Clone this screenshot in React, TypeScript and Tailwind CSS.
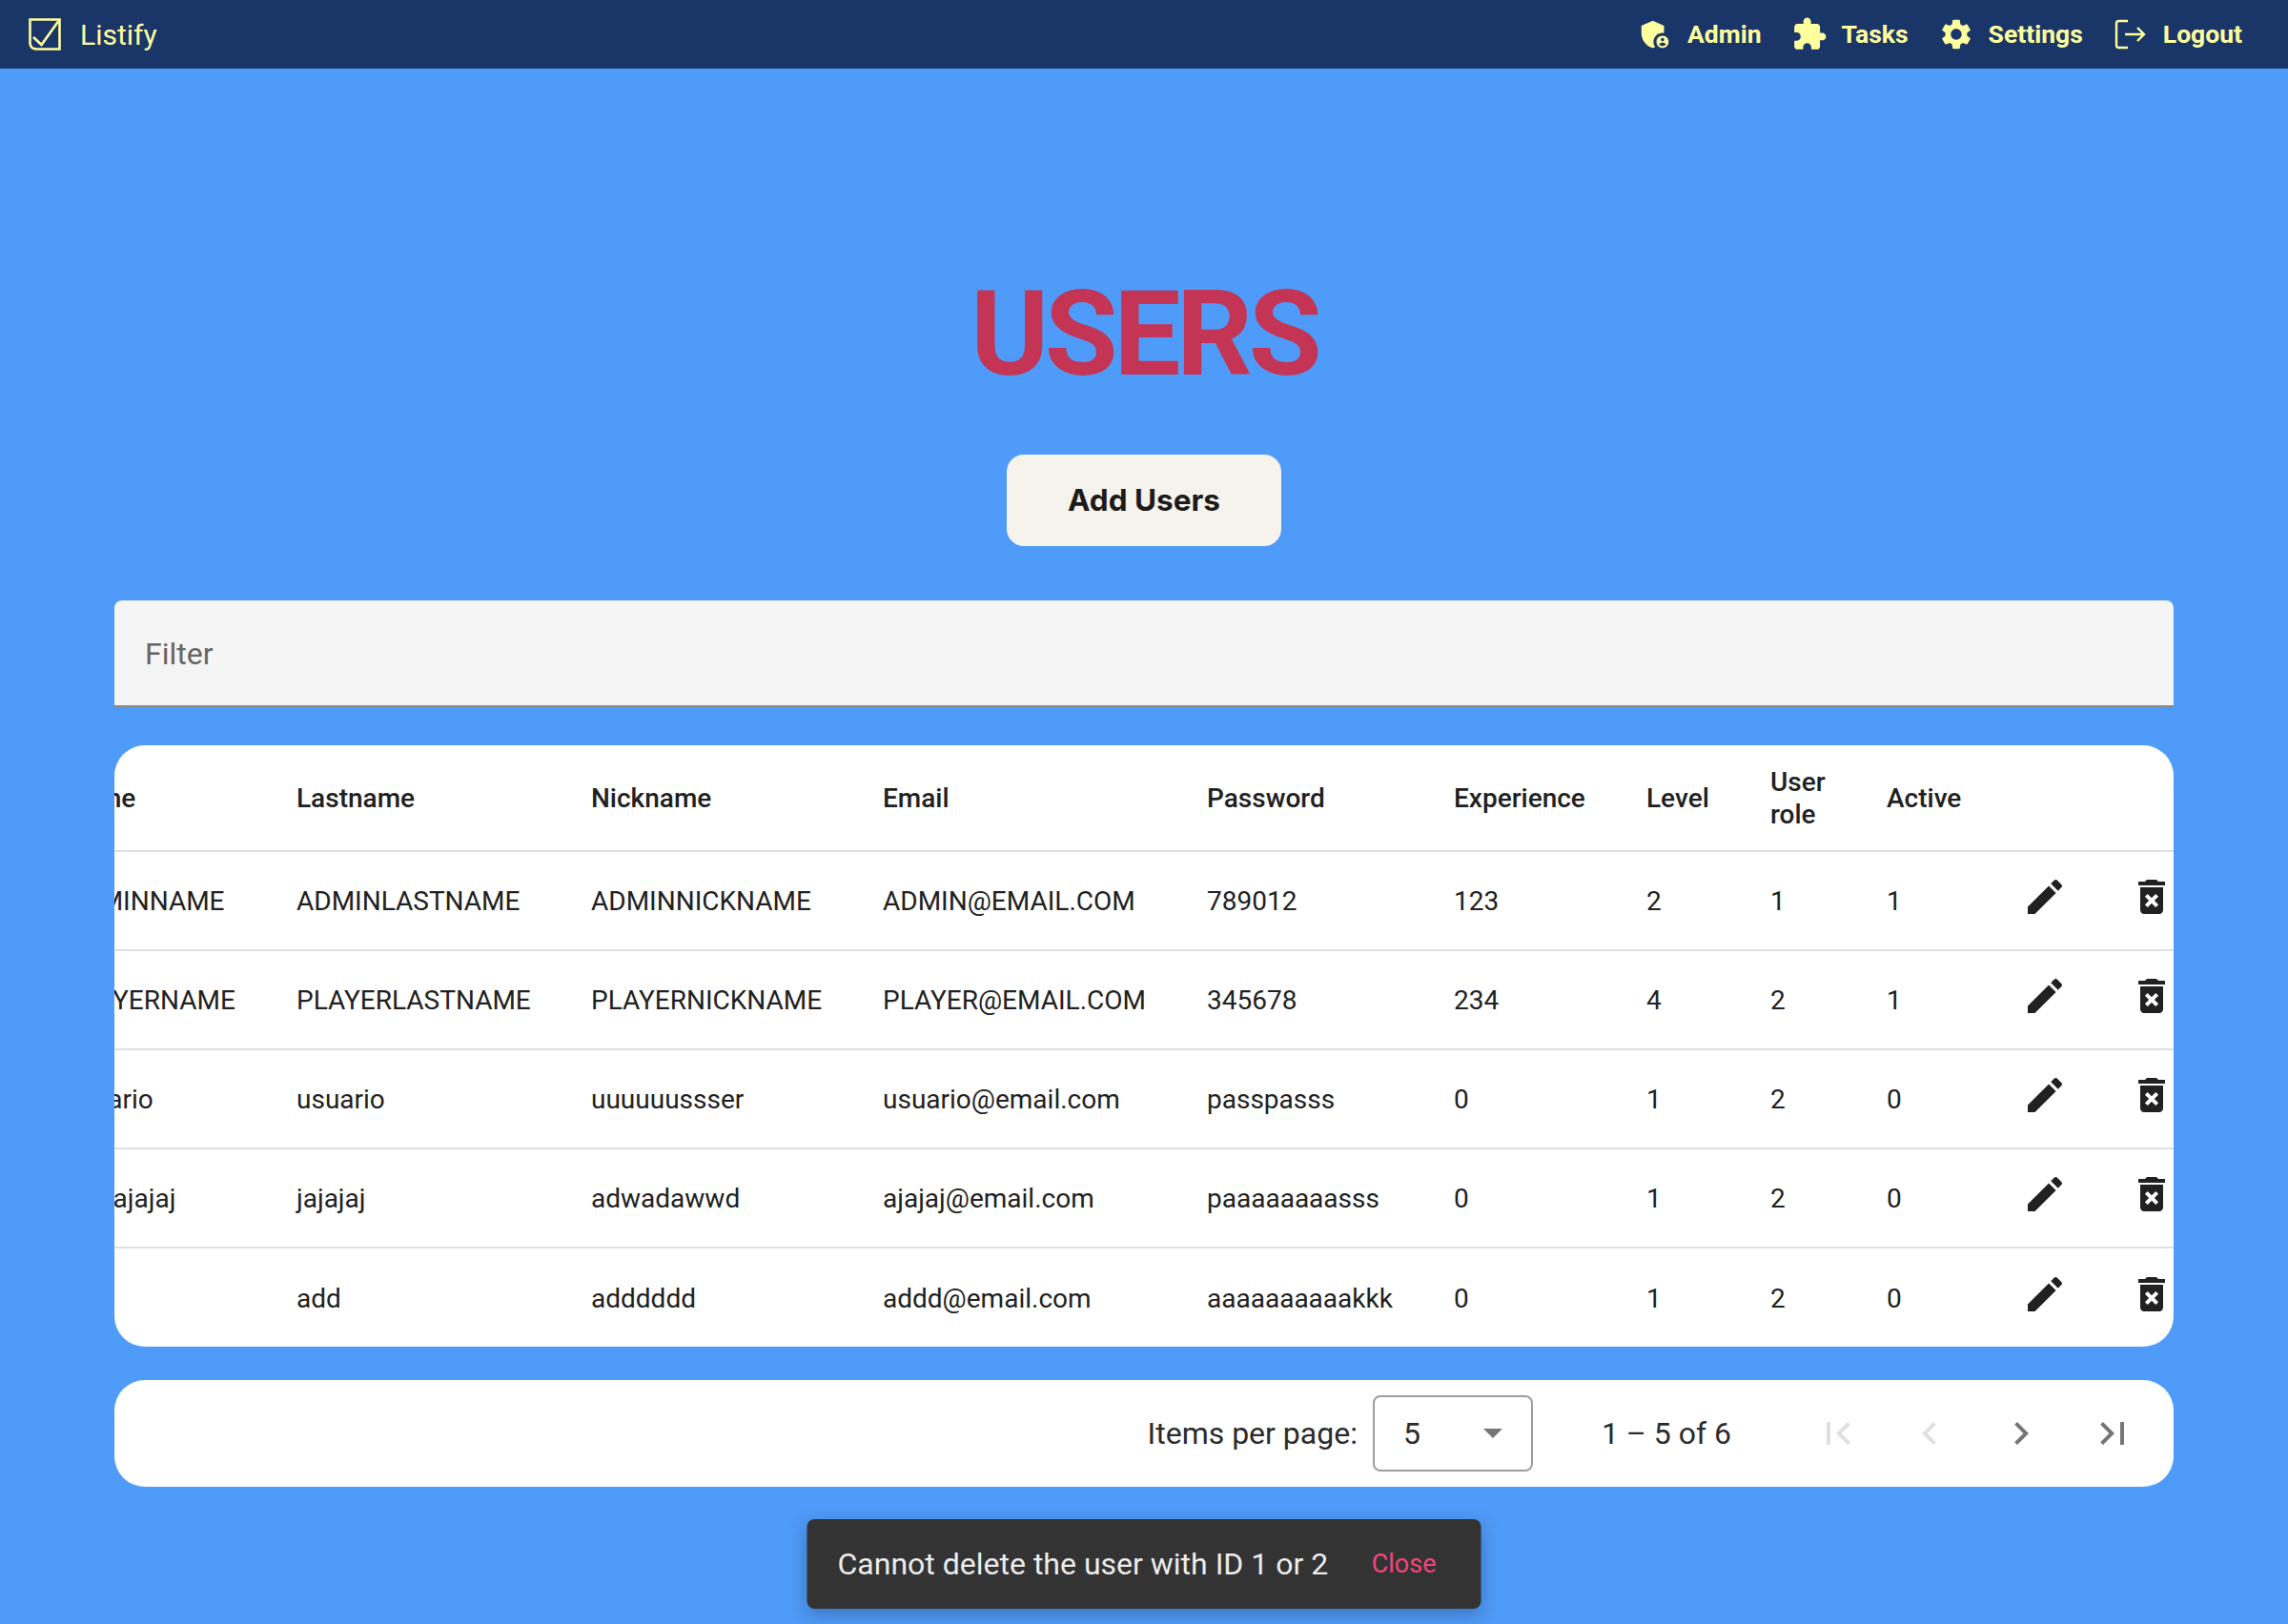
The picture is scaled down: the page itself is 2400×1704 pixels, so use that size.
import React from "react";

const Icon = ({ d, className = "" }: { d: string; className?: string }) => (
  <svg viewBox="0 0 24 24" fill="currentColor" className={className}>
    <path d={d} fillRule="evenodd" />
  </svg>
);

const P = {
  admin:
    "M17,11c0.34,0,0.67,0.04,1,0.09V6.27L10.5,3L3,6.27v4.91c0,4.54,3.2,8.79,7.5,9.82c0.55-0.13,1.08-0.32,1.6-0.55C11.41,19.47,11,18.28,11,17C11,13.69,13.69,11,17,11z M17,13c-2.21,0-4,1.79-4,4c0,2.21,1.79,4,4,4s4-1.79,4-4C21,14.79,19.21,13,17,13z M17,14.38c0.62,0,1.12,0.51,1.12,1.12s-0.51,1.12-1.12,1.12s-1.12-0.51-1.12-1.12S16.38,14.38,17,14.38z M17,19.75c-0.93,0-1.74-0.46-2.24-1.17c0.05-0.72,1.51-1.08,2.24-1.08s2.19,0.36,2.24,1.08C18.74,19.29,17.93,19.75,17,19.75z",
  puzzle:
    "M20.5 11H19V7c0-1.1-.9-2-2-2h-4V3.5C13 2.12 11.88 1 10.5 1S8 2.12 8 3.5V5H4c-1.1 0-1.99.9-1.99 2v3.8H3.5c1.49 0 2.7 1.21 2.7 2.7s-1.21 2.7-2.7 2.7H2V20c0 1.1.9 2 2 2h3.8v-1.5c0-1.49 1.21-2.7 2.7-2.7 1.49 0 2.7 1.21 2.7 2.7V22H17c1.1 0 2-.9 2-2v-4h1.5c1.38 0 2.5-1.12 2.5-2.5S21.88 11 20.5 11z",
  gear:
    "M19.14 12.94c.04-.3.06-.61.06-.94 0-.32-.02-.64-.07-.94l2.03-1.58c.18-.14.23-.41.12-.61l-1.92-3.32c-.12-.22-.37-.29-.59-.22l-2.39.96c-.5-.38-1.03-.7-1.62-.94l-.36-2.54c-.04-.24-.24-.41-.48-.41h-3.84c-.24 0-.43.17-.47.41l-.36 2.54c-.59.24-1.13.57-1.62.94l-2.39-.96c-.22-.08-.47 0-.59.22L2.74 8.87c-.12.21-.08.47.12.61l2.03 1.58c-.05.3-.09.63-.09.94s.02.64.07.94l-2.03 1.58c-.18.14-.23.41-.12.61l1.92 3.32c.12.22.37.29.59.22l2.39-.96c.5.38 1.03.7 1.62.94l.36 2.54c.05.24.24.41.48.41h3.84c.24 0 .44-.17.47-.41l.36-2.54c.59-.24 1.13-.56 1.62-.94l2.39.96c.22.08.47 0 .59-.22l1.92-3.32c.12-.22.07-.47-.12-.61l-2.01-1.58zM12 15.6c-1.98 0-3.6-1.62-3.6-3.6s1.62-3.6 3.6-3.6 3.6 1.62 3.6 3.6-1.62 3.6-3.6 3.6z",
  edit:
    "M3 17.25V21h3.75L17.81 9.94l-3.75-3.75L3 17.25zM20.71 7.04c.39-.39.39-1.02 0-1.41l-2.34-2.34c-.39-.39-1.02-.39-1.41 0l-1.83 1.83 3.75 3.75 1.83-1.83z",
  trash:
    "M6 19c0 1.1.9 2 2 2h8c1.1 0 2-.9 2-2V7H6v12zm2.46-7.12l1.41-1.41L12 12.59l2.12-2.12 1.41 1.41L13.41 14l2.12 2.12-1.41 1.41L12 15.41l-2.12 2.12-1.41-1.41L10.59 14l-2.13-2.12zM15.5 4l-1-1h-5l-1 1H5v2h14V4z",
  first: "M18.41 16.59L13.82 12l4.59-4.41L17 6l-6 6 6 6zM6 6h2v12H6z",
  prev: "M15.41 7.41L14 6l-6 6 6 6 1.41-1.41L10.83 12z",
  next: "M10 6L8.59 7.41 13.17 12l-4.58 4.59L10 18l6-6z",
  last: "M5.59 7.41L10.18 12l-4.59 4.59L7 18l6-6-6-6zM16 6h2v12h-2z",
};

const rows = [
  ["ADMINNAME", "ADMINLASTNAME", "ADMINNICKNAME", "ADMIN@EMAIL.COM", "789012", "123", "2", "1", "1"],
  ["PLAYERNAME", "PLAYERLASTNAME", "PLAYERNICKNAME", "PLAYER@EMAIL.COM", "345678", "234", "4", "2", "1"],
  ["usuario", "usuario", "uuuuuussser", "usuario@email.com", "passpasss", "0", "1", "2", "0"],
  ["jajajajajaj", "jajajaj", "adwadawwd", "ajajaj@email.com", "paaaaaaaasss", "0", "1", "2", "0"],
  ["", "add", "adddddd", "addd@email.com", "aaaaaaaaaakkk", "0", "1", "2", "0"],
];

const NavItem = ({ d, label }: { d: string; label: string }) => (
  <a className="flex items-center gap-[15px]">
    <Icon d={d} className="size-[38px]" />
    <span>{label}</span>
  </a>
);

export default function App() {
  return (
    <div className="relative min-h-[1704px] bg-[#4f9bf9] font-['Roboto',sans-serif] text-[#212121]">
      <nav className="flex h-[72px] items-center justify-between bg-[#1a3568] pl-[30px] pr-[48px] text-[#ffff9e]">
        <div className="flex items-center gap-5 text-[30px]">
          <svg viewBox="0 0 34 34" fill="none" stroke="currentColor" strokeWidth="2.6" className="size-[34px]">
            <path d="M1.5 1.5H32.5V32.5H8.5C4 32.5 1.5 30 1.5 26Z" />
            <path d="M5 20L13.5 28L32.5 1.5" />
          </svg>
          <span>Listify</span>
        </div>
        <div className="flex items-center gap-[31px] text-[26.5px] font-bold">
          <NavItem d={P.admin} label="Admin" />
          <NavItem d={P.puzzle} label="Tasks" />
          <NavItem d={P.gear} label="Settings" />
          <a className="flex items-center gap-[15px]">
            <svg viewBox="0 0 38 38" fill="none" stroke="currentColor" strokeWidth="2.4" className="size-[38px]">
              <path d="M16 5H6.5C5 5 4 6 4 7.5V30.5C4 32 5 33 6.5 33H16" />
              <path d="M13 19H33M26 12L33 19L26 26" />
            </svg>
            <span>Logout</span>
          </a>
        </div>
      </nav>

      <main className="flex flex-col items-center px-[120px]">
        <h1 className="mt-[204px] text-[125px] font-bold leading-[150px] tracking-[-4.5px] text-[#c43555]">USERS</h1>
        <button className="mt-[51px] h-[96px] w-[288px] rounded-[18px] bg-[#f6f3ed] font-['Inter',sans-serif] text-[31.5px] font-bold text-[#1c1b1a]">
          Add Users
        </button>

        <div className="mt-[57px] flex h-[112px] w-full items-center rounded-t-[8px] border-b-2 border-[#8a8a8a] bg-[#f5f5f5] px-8 pt-[2px] text-[32px] text-[#666666]">
          Filter
        </div>

        <div className="mt-10 w-full overflow-hidden rounded-[32px] bg-white">
          <table className="-ml-[52px] w-[2300px] table-fixed border-collapse text-left text-[28px]">
            <colgroup>
              <col className="w-[243px]" />
              <col className="w-[309px]" />
              <col className="w-[306px]" />
              <col className="w-[340px]" />
              <col className="w-[259px]" />
              <col className="w-[202px]" />
              <col className="w-[130px]" />
              <col className="w-[122px]" />
              <col className="w-[142px]" />
              <col className="w-[112px]" />
              <col />
            </colgroup>
            <thead>
              <tr className="h-[111px] border-b-2 border-[#e0e0e0] font-medium leading-[34px]">
                <th className="pt-[2px] font-medium">Name</th>
                <th className="pt-[2px] font-medium">Lastname</th>
                <th className="pt-[2px] font-medium">Nickname</th>
                <th className="pt-[2px] font-medium">Email</th>
                <th className="pt-[2px] font-medium">Password</th>
                <th className="pt-[2px] font-medium">Experience</th>
                <th className="pt-[2px] font-medium">Level</th>
                <th className="pt-[2px] font-medium">
                  User
                  <br />
                  role
                </th>
                <th className="pt-[2px] font-medium">Active</th>
                <th />
                <th />
                <th />
              </tr>
            </thead>
            <tbody>
              {rows.map((r, i) => (
                <tr key={i} className="h-[104px] border-b-2 border-[#e0e0e0] last:border-b-0">
                  {r.map((c, j) => (
                    <td key={j} className="pt-[2px]">
                      {c}
                    </td>
                  ))}
                  <td>
                    <Icon d={P.edit} className="mb-2 size-12 text-[#212121]" />
                  </td>
                  <td>
                    <Icon d={P.trash} className="mb-2 size-12 text-[#212121]" />
                  </td>
                  <td />
                </tr>
              ))}
            </tbody>
          </table>
        </div>

        <div className="mt-[35px] flex h-[112px] w-full items-center justify-end rounded-[32px] bg-white pr-4 text-[32px] text-[#2b2b2b]">
          <span>Items per page:</span>
          <div className="ml-4 flex h-[80px] w-[168px] items-center justify-between rounded-[8px] border-2 border-[#9e9e9e] pl-[30px] pr-[30px]">
            <span>5</span>
            <span className="h-0 w-0 border-x-[10px] border-t-[10px] border-x-transparent border-t-[#757575]" />
          </div>
          <span className="ml-[72px] mr-[64px]">1 – 5 of 6</span>
          <div className="flex w-24 justify-center text-[#e0e0e0]">
            <Icon d={P.first} className="size-12" />
          </div>
          <div className="flex w-24 justify-center text-[#e0e0e0]">
            <Icon d={P.prev} className="size-12" />
          </div>
          <div className="flex w-24 justify-center text-[#757575]">
            <Icon d={P.next} className="size-12" />
          </div>
          <div className="flex w-24 justify-center text-[#757575]">
            <Icon d={P.last} className="size-12" />
          </div>
        </div>
      </main>

      <div className="absolute bottom-4 left-1/2 flex h-[94px] w-[707px] -translate-x-1/2 items-center justify-between rounded-[8px] bg-[#333333] pl-8 pr-[47px] text-[32px] text-[#ececec] shadow-[0_6px_20px_rgba(0,0,0,0.25)]">
        <span>Cannot delete the user with ID 1 or 2</span>
        <span className="text-[27px] text-[#f0457f]">Close</span>
      </div>
    </div>
  );
}
